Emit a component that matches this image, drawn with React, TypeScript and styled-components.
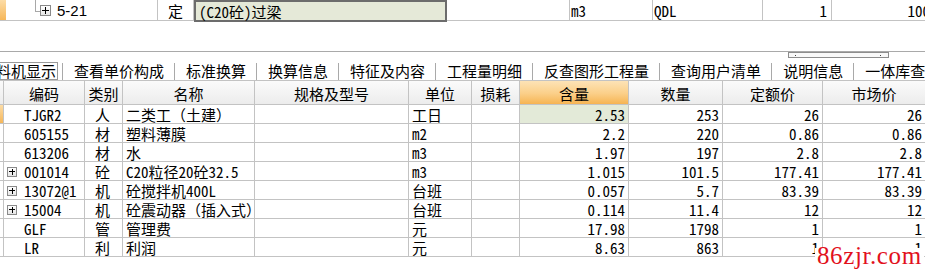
import { Fragment } from 'react'
import styled, { createGlobalStyle } from 'styled-components'

const MONO = `"Noto Sans Mono CJK SC", "Noto Sans CJK SC", monospace`
const SANS = `"Noto Sans CJK SC", "Noto Sans", sans-serif`
const LINE = '#c3c3c3'

const GlobalStyle = createGlobalStyle`
	html, body {
		margin: 0;
		padding: 0;
		background: #fff;
	}
	body {
		font-family: ${SANS};
		color: #000;
	}
`

const Page = styled.div`
	position: relative;
	width: 925px;
	height: 269px;
	overflow: hidden;
	background: #fff;
`

/* ---------- top (parent) row ---------- */

const TopRow = styled.div`
	display: flex;
	height: 21px;
	box-sizing: border-box;
	border-bottom: 1px solid ${LINE};
	margin-bottom: 30px;
	white-space: nowrap;
`

const Marker = styled.div`
	flex: none;
	width: 6px;
	background: linear-gradient(#fcdca6, #f6b75a);
`

const TopCell = styled.div<{ $w: number; $align?: 'left' | 'center' | 'right'; $mono?: boolean }>`
	flex: none;
	width: ${p => p.$w}px;
	box-sizing: border-box;
	border-right: 1px solid ${LINE};
	display: flex;
	align-items: center;
	justify-content: ${p =>
		p.$align === 'right' ? 'flex-end' : p.$align === 'center' ? 'center' : 'flex-start'};
	padding: 1px ${p => (p.$align === 'right' ? 4 : 1)}px 0 1px;
	font-family: ${p => (p.$mono ? MONO : SANS)};
	font-size: 15px;
	line-height: 18px;
	overflow: hidden;
`

const TreeCell = styled(TopCell)`
	padding-left: 29px;
	align-items: stretch;
`

const TreeLine = styled.span`
	flex: none;
	width: 5px;
	height: 12px;
	box-sizing: border-box;
	border-left: 1px solid #a8a8a8;
	border-bottom: 1px solid #a8a8a8;
	margin-top: -1px;
`

const ItemCode = styled.span`
	align-self: center;
	margin-left: 6px;
	font-family: 'Liberation Sans', sans-serif;
	font-size: 15px;
`

const EditBox = styled.div`
	flex: none;
	align-self: flex-start;
	width: 253px;
	height: 22px;
	box-sizing: border-box;
	border: 2px solid #6c6c6c;
	background: #e5e9d8;
	padding: 1px 3px 0;
	font-family: ${MONO};
	font-size: 15px;
	line-height: 17px;
	white-space: nowrap;
`

const PlusBox = styled.span<{ $size: number }>`
	position: relative;
	flex: none;
	align-self: center;
	width: ${p => p.$size}px;
	height: ${p => p.$size}px;
	box-sizing: border-box;
	border: 1px solid #8a8a8a;
	background: linear-gradient(#ffffff, #e6e6e6);

	&::before,
	&::after {
		content: '';
		position: absolute;
		background: #000;
	}
	&::before {
		left: 1px;
		right: 1px;
		top: 50%;
		height: 1px;
		margin-top: -0.5px;
	}
	&::after {
		top: 1px;
		bottom: 1px;
		left: 50%;
		width: 1px;
		margin-left: -0.5px;
	}
`

const NoBox = styled.span`
	flex: none;
	width: 10px;
`

/* ---------- tab bar ---------- */

const TabBar = styled.div`
	position: relative;
	display: flex;
	align-items: flex-end;
	height: 29px;
	box-sizing: border-box;
	border-top: 1px solid #a9a9a9;
	overflow: hidden;
	white-space: nowrap;
	font-family: ${SANS};
	font-size: 15px;
`

const ActiveTab = styled.div`
	flex: none;
	height: 18px;
	line-height: 16px;
	box-sizing: border-box;
	margin-left: -19px;
	margin-right: 4px;
	padding-right: 1px;
	border: 1px solid #9a9a9a;
	border-left: none;
`

const Sep = styled.span`
	flex: none;
	width: 1px;
	height: 17px;
	margin-right: 11px;
	background: #a9a9a9;
`

const Tab = styled.div`
	flex: none;
	height: 18px;
	line-height: 18px;
	padding-right: 10px;
`

const ScrollThumb = styled.div`
	position: absolute;
	top: 0;
	left: 788px;
	width: 101px;
	height: 6px;
	box-sizing: border-box;
	border: 1px solid #8c8c8c;
	background: #f8f8f8;

	&::before,
	&::after {
		content: '';
		position: absolute;
		top: 2px;
		width: 1px;
		height: 1px;
		background: #444;
	}
	&::before {
		left: 6px;
	}
	&::after {
		right: 7px;
	}
`

/* ---------- grid ---------- */

const Grid = styled.div`
	display: grid;
	grid-template-columns: 4px 81px 38px 132px 154px 63px 48px 109px 94px 100px 103px;
	grid-template-rows: 24px repeat(8, 19px);
	border-top: 1px solid ${LINE};
`

const HeadCell = styled.div<{ $hot?: boolean }>`
	box-sizing: border-box;
	border-right: 1px solid ${LINE};
	border-bottom: 1px solid ${LINE};
	background: ${p =>
		p.$hot
			? 'linear-gradient(#fde3b6, #fbcf88 55%, #f6b453)'
			: 'linear-gradient(#fbfbfb, #ececec)'};
	text-align: center;
	font-family: ${SANS};
	font-size: 15px;
	line-height: 25px;
	white-space: nowrap;
	overflow: hidden;
`

const RowHead = styled.div<{ $sel?: boolean }>`
	box-sizing: border-box;
	border-right: 1px solid ${LINE};
	border-bottom: 1px solid ${LINE};
	background: ${p => (p.$sel ? 'linear-gradient(#fcdca6, #f6b75a)' : '#fff')};
`

const Cell = styled.div<{ $align?: 'left' | 'center' | 'right'; $active?: boolean }>`
	box-sizing: border-box;
	border-right: 1px solid ${LINE};
	border-bottom: 1px solid ${LINE};
	display: flex;
	align-items: center;
	justify-content: ${p =>
		p.$align === 'right' ? 'flex-end' : p.$align === 'center' ? 'center' : 'flex-start'};
	padding: 1px ${p => (p.$align === 'right' ? 3 : 2)}px 0 ${p => (p.$align === 'left' ? 3 : 0)}px;
	background: ${p => (p.$active ? '#e3ead8' : '#fff')};
	font-family: ${MONO};
	font-size: 15px;
	line-height: 18px;
	white-space: nowrap;
	overflow: hidden;
`

const CodeCell = styled(Cell)`
	padding-left: 3px;
	gap: 7px;
`

const Watermark = styled.div`
	position: absolute;
	left: 815px;
	top: 248px;
	height: 21px;
	padding: 0 2px;
	background: #fff;
	color: #e2101c;
	font-family: 'Liberation Serif', serif;
	font-size: 25px;
	line-height: 15px;
	letter-spacing: 0.6px;
	white-space: nowrap;
`

interface Row {
	code: string
	cat: string
	name: string
	unit: string
	qty: string
	amount: string
	quota: string
	market: string
	plus?: boolean
	sel?: boolean
}

const rows: Row[] = [
	{ code: 'TJGR2', cat: '人', name: '二类工（土建）', unit: '工日', qty: '2.53', amount: '253', quota: '26', market: '26', sel: true },
	{ code: '605155', cat: '材', name: '塑料薄膜', unit: 'm2', qty: '2.2', amount: '220', quota: '0.86', market: '0.86' },
	{ code: '613206', cat: '材', name: '水', unit: 'm3', qty: '1.97', amount: '197', quota: '2.8', market: '2.8' },
	{ code: '001014', cat: '砼', name: 'C20粒径20砼32.5', unit: 'm3', qty: '1.015', amount: '101.5', quota: '177.41', market: '177.41', plus: true },
	{ code: '13072@1', cat: '机', name: '砼搅拌机400L', unit: '台班', qty: '0.057', amount: '5.7', quota: '83.39', market: '83.39', plus: true },
	{ code: '15004', cat: '机', name: '砼震动器（插入式）', unit: '台班', qty: '0.114', amount: '11.4', quota: '12', market: '12', plus: true },
	{ code: 'GLF', cat: '管', name: '管理费', unit: '元', qty: '17.98', amount: '1798', quota: '1', market: '1' },
	{ code: 'LR', cat: '利', name: '利润', unit: '元', qty: '8.63', amount: '863', quota: '1', market: '1' },
]

const tabs = ['查看单价构成', '标准换算', '换算信息', '特征及内容', '工程量明细', '反查图形工程量', '查询用户清单', '说明信息', '一体库查询']

const headers = ['编码', '类别', '名称', '规格及型号', '单位', '损耗', '含量', '数量', '定额价', '市场价']

export default function App() {
	return (
		<Page>
			<GlobalStyle />
			<TopRow>
				<Marker />
				<TreeCell $w={152}>
					<TreeLine />
					<PlusBox $size={11} />
					<ItemCode>5-21</ItemCode>
				</TreeCell>
				<TopCell $w={36} $align="center">定</TopCell>
				<EditBox>(C20砼)过梁</EditBox>
				<TopCell $w={123} />
				<TopCell $w={83} $mono>m3</TopCell>
				<TopCell $w={110} $mono>QDL</TopCell>
				<TopCell $w={69} $mono $align="right">1</TopCell>
				<TopCell $w={103} $mono $align="right">100</TopCell>
			</TopRow>

			<TabBar>
				<ActiveTab>工料机显示</ActiveTab>
				{tabs.map(t => (
					<Fragment key={t}>
						<Sep />
						<Tab>{t}</Tab>
					</Fragment>
				))}
				<ScrollThumb />
			</TabBar>

			<Grid>
				<HeadCell />
				{headers.map(h => (
					<HeadCell key={h} $hot={h === '含量'}>
						{h}
					</HeadCell>
				))}
				{rows.map(r => (
					<Fragment key={r.code}>
						<RowHead $sel={r.sel} />
						<CodeCell>
							{r.plus ? <PlusBox $size={10} /> : <NoBox />}
							{r.code}
						</CodeCell>
						<Cell $align="center">{r.cat}</Cell>
						<Cell $align="left">{r.name}</Cell>
						<Cell />
						<Cell $align="left">{r.unit}</Cell>
						<Cell />
						<Cell $align="right" $active={r.sel}>{r.qty}</Cell>
						<Cell $align="right">{r.amount}</Cell>
						<Cell $align="right">{r.quota}</Cell>
						<Cell $align="right">{r.market}</Cell>
					</Fragment>
				))}
			</Grid>

			<Watermark>86zjr.com</Watermark>
		</Page>
	)
}
